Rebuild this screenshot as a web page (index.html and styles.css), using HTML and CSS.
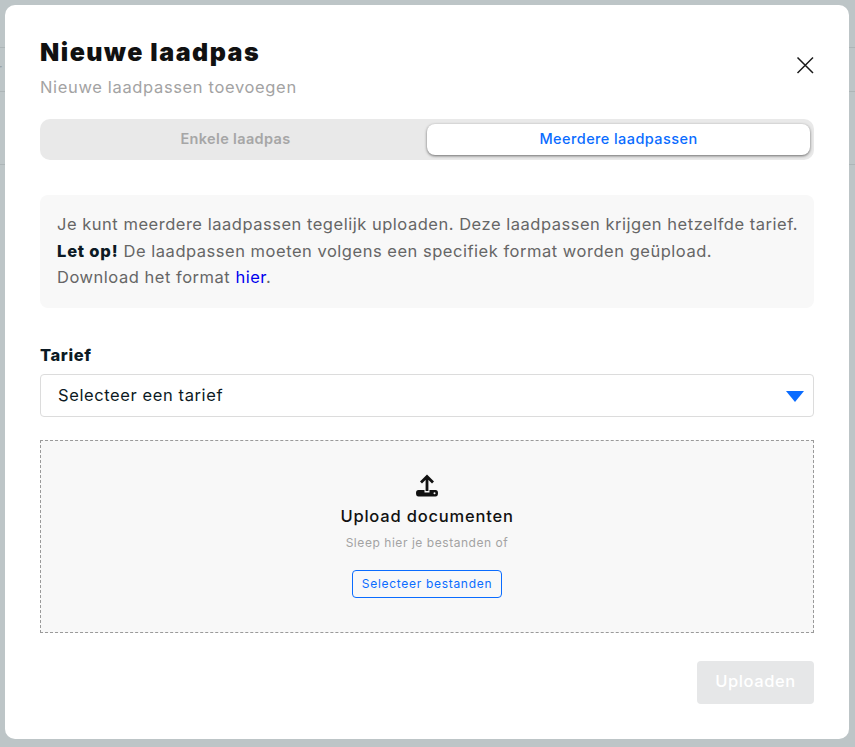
FILE: index.html
```html
<!DOCTYPE html>
<html lang="nl">
<head>
<meta charset="utf-8">
<title>Nieuwe laadpas</title>
<link rel="stylesheet" href="styles.css">
</head>
<body>
<div class="backdrop">
  <div class="bg-row bg-row-1"></div>
  <div class="bg-row bg-row-2"><span class="bg-ghost">r</span></div>
  <div class="bg-row bg-row-3"></div>
</div>
<div class="modal">
  <header class="head">
    <div class="head-text">
      <h1 class="title">Nieuwe laadpas</h1>
      <p class="subtitle">Nieuwe laadpassen toevoegen</p>
    </div>
    <button class="close" aria-label="Sluiten">
      <svg width="18" height="18" viewBox="0 0 18 18"><path d="M1.500 1.500 L17 17 M17 1.500 L1.500 17" stroke="#1a1a1a" stroke-width="1.500" fill="none"/></svg>
    </button>
  </header>
  <div class="tabs">
    <div class="tab">Enkele laadpas</div>
    <div class="tab tab-active">Meerdere laadpassen</div>
  </div>
  <div class="info">
    <p>Je kunt meerdere laadpassen tegelijk uploaden. Deze laadpassen krijgen hetzelfde tarief.</p>
    <p><strong>Let op!</strong> De laadpassen moeten volgens een specifiek format worden geüpload.</p>
    <p>Download het format <a href="#">hier</a>.</p>
  </div>
  <label class="label">Tarief</label>
  <div class="select">
    <span>Selecteer een tarief</span>
    <svg class="caret" width="18" height="11" viewBox="0 0 18 11"><path d="M0 0 H18 L9 11 Z" fill="#0a6cff"/></svg>
  </div>
  <div class="drop">
    <svg class="upload-icon" width="24" height="24" viewBox="0 0 24 24"><path d="M12 2.500 L12 17 M6 8.500 L12 2.500 L18 8.500" stroke="#111" stroke-width="2.800" fill="none"/><path d="M3.500 16 H9.500 L9.500 18.500 H14.500 L14.500 16 H20.500 Q23 16 23 19 Q23 22.500 20.500 22.500 H3.500 Q1 22.500 1 19 Q1 16 3.500 16 Z" fill="#111"/><circle cx="19.500" cy="19.200" r="1" fill="#f8f8f8"/></svg>
    <div class="drop-title">Upload documenten</div>
    <div class="drop-sub">Sleep hier je bestanden of</div>
    <button class="pick">Selecteer bestanden</button>
  </div>
  <div class="actions">
    <button class="submit">Uploaden</button>
  </div>
</div>
</body>
</html>
```
FILE: styles.css
```css
* { box-sizing: border-box; }
html, body { margin: 0; height: 100%; }
body {
  width: 855px;
  height: 747px;
  overflow: hidden;
  position: relative;
  background: #bdc5c7;
  font-family: "Inter", sans-serif;
}
.backdrop { position: absolute; inset: 0; }
.bg-row { border-bottom: 1px solid #adb5b7; }
.bg-row-1 { height: 48px; }
.bg-row-2 { height: 44px; position: relative; }
.bg-row-3 { height: 73px; }
.bg-ghost { position: absolute; left: -4px; top: 11px; font-size: 16px; color: #9aa2a4; }
.modal {
  position: absolute;
  left: 5px;
  top: 5px;
  width: 844px;
  height: 734px;
  background: #fff;
  border-radius: 10px;
  padding: 32px 35px 0;
  display: flex;
  flex-direction: column;
}
.head { display: flex; justify-content: space-between; align-items: flex-start; height: 82px; }
.title {
  margin: 0;
  font-size: 25px;
  font-weight: 900;
  line-height: 30px;
  letter-spacing: 1.5px;
  color: #111;
}
.subtitle { margin: 9px 0 0; font-size: 16.500px; line-height: 22px; color: #a3a3a3; letter-spacing: 0.65px; }
.close { border: 0; background: none; padding: 0; margin: 19px 0 0; width: 18px; height: 18px; display: block; }
.close svg { display: block; }
.tabs {
  display: flex;
  height: 41px;
  background: #e9e9e9;
  border-radius: 10px;
  padding: 5px 4px 5px 4px;
}
.tab {
  flex: 1;
  display: flex;
  align-items: center;
  justify-content: center;
  border-radius: 8px;
  padding-bottom: 2px;
  font-size: 14.500px;
  font-weight: 600;
  letter-spacing: 0.35px;
  color: #a6a6a6;
}
.tab-active { background: #fff; color: #0a6cff; font-weight: 500; letter-spacing: 0.42px; box-shadow: 0 1px 3px rgba(0,0,0,.55); }
.info {
  margin-top: 35px;
  height: 113px;
  padding: 16px 17px 0;
  background: #f8f8f8;
  border-radius: 8px;
  font-size: 16.500px;
  line-height: 26.500px;
  letter-spacing: 0.52px;
  color: #666;
}
.info p { margin: 0; white-space: nowrap; }
.info strong { font-weight: 800; letter-spacing: 0.8px; color: #0c1a24; }
.info a { color: #0000ee; text-decoration: none; }
.label { margin-top: 36px; font-size: 16.500px; line-height: 22px; font-weight: 800; letter-spacing: 0.6px; color: #0c1a24; }
.select {
  margin-top: 8px;
  height: 43px;
  border: 1px solid #dcdcdc;
  border-radius: 4px;
  padding: 0 9px 2px 17px;
  display: flex;
  align-items: center;
  justify-content: space-between;
  font-size: 16.500px;
  letter-spacing: 0.6px;
  color: #0c1a24;
}
.caret { display: block; margin-top: 4px; }
.drop {
  margin-top: 23px;
  height: 193px;
  border: 1px dashed #9a9a9a;
  background: #f8f8f8;
  display: flex;
  flex-direction: column;
  align-items: center;
  padding-top: 33px;
}
.upload-icon { display: block; }
.drop-title { margin-top: 6px; font-size: 16.500px; line-height: 24px; font-weight: 500; letter-spacing: 0.8px; color: #111; }
.drop-sub { margin-top: 7px; font-size: 12px; line-height: 16px; letter-spacing: 0.55px; color: #a3a3a3; }
.pick {
  margin-top: 19px;
  width: 150px;
  height: 28px;
  padding: 0 0 2px;
  border: 1px solid #0a6cff;
  border-radius: 4px;
  background: none;
  color: #0a6cff;
  font-family: inherit;
  font-size: 12px;
  letter-spacing: 0.7px;
}
.actions { display: flex; justify-content: flex-end; margin-top: 28px; }
.submit {
  width: 117px;
  height: 43px;
  border: 0;
  border-radius: 4px;
  padding: 0 0 4px;
  background: #e6e7e8;
  color: #fff;
  font-family: inherit;
  font-size: 16.500px;
  font-weight: 500;
  letter-spacing: 0.6px;
}
```
